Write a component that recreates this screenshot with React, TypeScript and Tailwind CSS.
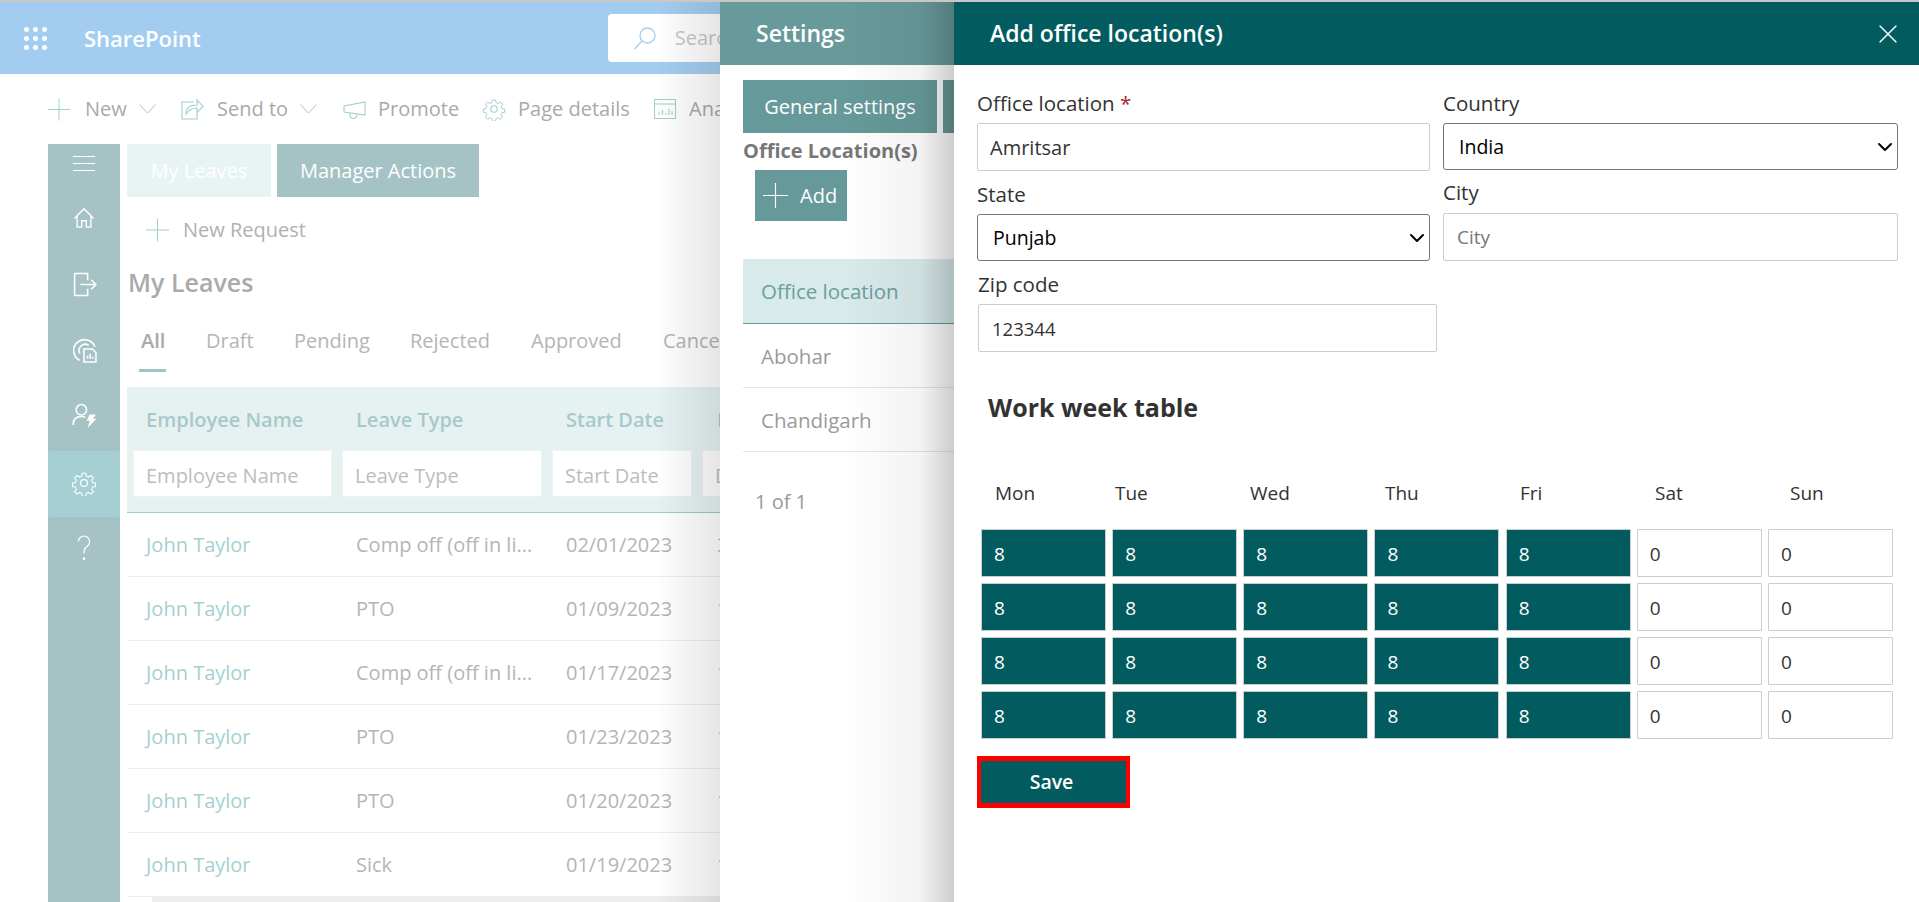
import { ChevronDown, X } from "lucide-react";
import type { ReactNode } from "react";

type IconProps = { className?: string };

const Svg = ({ className, children }: IconProps & { children: ReactNode }) => (
  <svg viewBox="0 0 24 24" fill="none" stroke="currentColor" strokeWidth="1.1" className={className}>
    {children}
  </svg>
);

const PlusIcon = ({ className }: IconProps) => (
  <svg viewBox="0 0 24 24" fill="none" stroke="currentColor" strokeWidth="1.1" className={className}>
    <path d="M12 0v24M0 12h24" />
  </svg>
);

const ThinChevron = ({ className }: IconProps) => (
  <svg viewBox="0 0 17 10" fill="none" stroke="currentColor" strokeWidth="1" className={className}>
    <path d="M.5.5l8 8.500 8-8.500" />
  </svg>
);

const GearIcon = ({ className }: IconProps) => (
  <Svg className={className}>
    <circle cx="12" cy="12" r="3.2" />
    <path d="M10.2 2h3.6l.6 3 2.1.9 2.6-1.7 2.5 2.6-1.7 2.5.9 2.1 3 .6v3.6l-3 .6-.9 2.1 1.7 2.6-2.5 2.5-2.6-1.7-2.1.9-.6 3h-3.6l-.6-3-2.1-.9-2.6 1.7-2.5-2.5 1.7-2.6-.9-2.1-3-.6v-3.6l3-.6.9-2.1-1.7-2.5 2.5-2.6 2.6 1.7 2.1-.9z" transform="translate(1.2 1.2) scale(.9)" />
  </Svg>
);

const SearchIcon = ({ className }: IconProps) => (
  <svg viewBox="0 0 24 24" fill="none" stroke="currentColor" strokeWidth="1.400" className={className}>
    <circle cx="14.5" cy="9.5" r="7.5" />
    <path d="M9 15 1.5 23" />
  </svg>
);

const SendIcon = ({ className }: IconProps) => (
  <Svg className={className}>
    <path d="M14 5H2v17h15v-6" />
    <path d="M6 17c0-6 4-9 11-9V3l6 6.5-6 6V11c-5 0-8 2-11 6z" />
  </Svg>
);

const MegaphoneIcon = ({ className }: IconProps) => (
  <Svg className={className}>
    <path d="M23 5v13L2 15V9z" />
    <path d="M8 16v2a3.5 3.5 0 0 0 7 0v-.8" />
  </Svg>
);

const AnalyticsIcon = ({ className }: IconProps) => (
  <Svg className={className}>
    <path d="M1.5 2.5h21v19h-21zM1.5 7h21" />
    <path d="M6 18v-3M9.5 18v-5M13 18v-2M16 18v-6M19 18v-4" />
  </Svg>
);

const HomeIcon = ({ className }: IconProps) => (
  <Svg className={className}>
    <path d="M1.5 12.5 12 2l10.5 10.5M4.5 10v12h5v-7h5v7h5V10" strokeWidth="1.5" />
  </Svg>
);

const ExitIcon = ({ className }: IconProps) => (
  <Svg className={className}>
    <path d="M15 8V1.5H2.500v21H15V16M8 12h15M18.500 7.500 23 12l-4.500 4.500" strokeWidth="1.5" />
  </Svg>
);

const ReportIcon = ({ className }: IconProps) => (
  <Svg className={className}>
    <path d="M7.500 21.500A10.500 10.500 0 1 1 22 8.500" strokeWidth="1.500" />
    <path d="M7.500 15A6 6 0 0 1 16 7" strokeWidth="1.500" />
    <path d="M11.500 10.500h8l3.500 3.500v9h-11.500zM15 20v-3M17.500 20v-5M20 20v-2" strokeWidth="1.500" />
  </Svg>
);

const PersonBoltIcon = ({ className }: IconProps) => (
  <Svg className={className}>
    <circle cx="9" cy="6.500" r="5" strokeWidth="1.500" />
    <path d="M1 21c0-5 3-8 8-8 1.500 0 3 .3 4 1" strokeWidth="1.500" />
    <path d="M17 11h6l-3 4h3.500L15 24l2-7h-3z" fill="currentColor" stroke="none" />
  </Svg>
);

const QuestionIcon = ({ className }: IconProps) => (
  <svg viewBox="0 0 16 28" fill="none" stroke="currentColor" strokeWidth="1.300" className={className}>
    <path d="M2 7a6 6 0 1 1 9.500 5c-2 1.500-3.500 3-3.500 6v2" />
    <circle cx="8" cy="25.500" r=".8" fill="currentColor" />
  </svg>
);

const AppDots = () => (
  <div className="grid w-[23px] grid-cols-3 gap-x-[4px] gap-y-[4px]">
    {Array.from({ length: 9 }).map((_, i) => (
      <span key={i} className="h-[5px] w-[5px] rounded-full bg-white" />
    ))}
  </div>
);

const rows = [
  { type: "Comp off (off in li...", start: "02/01/2023", days: "3" },
  { type: "PTO", start: "01/09/2023", days: "1" },
  { type: "Comp off (off in li...", start: "01/17/2023", days: "1" },
  { type: "PTO", start: "01/23/2023", days: "1" },
  { type: "PTO", start: "01/20/2023", days: "1" },
  { type: "Sick", start: "01/19/2023", days: "1" },
];

const days = ["Mon", "Tue", "Wed", "Thu", "Fri", "Sat", "Sun"];

const pivots = [
  { name: "All", width: "w-[65px] font-semibold text-[#a9a9a9]" },
  { name: "Draft", width: "w-[88px]" },
  { name: "Pending", width: "w-[116px]" },
  { name: "Rejected", width: "w-[121px]" },
  { name: "Approved", width: "w-[132px]" },
  { name: "Cancelled", width: "w-[120px]" },
];

const CommandBar = () => (
  <div className="flex h-[70px] items-center pl-[48px] text-[20px] text-[#a9a9a9]">
    <PlusIcon className="h-[23px] w-[22px] shrink-0 text-[#9fd0d0]" />
    <span className="ml-[15px] w-[54px]">New</span>
    <ThinChevron className="h-[10px] w-[17px] shrink-0 text-[#bbb]" />
    <SendIcon className="ml-[24px] h-[24px] w-[24px] shrink-0 text-[#a6cccc]" />
    <span className="ml-[13px] w-[83px]">Send to</span>
    <ThinChevron className="h-[10px] w-[17px] shrink-0 text-[#bbb]" />
    <MegaphoneIcon className="ml-[25px] h-[24px] w-[24px] shrink-0 text-[#a6cccc]" />
    <span className="ml-[12px] w-[104px]">Promote</span>
    <GearIcon className="h-[24px] w-[24px] shrink-0 text-[#a6cccc]" />
    <span className="ml-[12px] w-[135px]">Page details</span>
    <AnalyticsIcon className="h-[24px] w-[24px] shrink-0 text-[#a6cccc]" />
    <span className="ml-[12px]">Analytics</span>
  </div>
);

const Rail = () => {
  const itemClass = "flex h-[66px] items-center justify-center text-white";
  return (
    <div className="flex h-[758px] w-[72px] shrink-0 flex-col bg-[#a5c3c4]">
      <div className="flex h-[41px] flex-col items-center gap-[6px] pt-[12px]">
        <span className="h-[1px] w-[22px] bg-white" />
        <span className="h-[1px] w-[22px] bg-white" />
        <span className="h-[1px] w-[22px] bg-white" />
      </div>
      <div className={itemClass}><HomeIcon className="h-[22px] w-[22px]" /></div>
      <div className={itemClass}><ExitIcon className="h-[25px] w-[25px]" /></div>
      <div className={itemClass}><ReportIcon className="h-[25px] w-[25px]" /></div>
      <div className="flex h-[68px] items-center justify-center pb-[4px] text-white"><PersonBoltIcon className="h-[25px] w-[25px]" /></div>
      <div className={`${itemClass} rounded-[2px] bg-[#a5cfd2] pb-[3px]`}><GearIcon className="h-[26px] w-[26px]" /></div>
      <div className={`${itemClass} pb-[4px]`}><QuestionIcon className="h-[26px] w-[16px]" /></div>
    </div>
  );
};

const LeavesTable = () => {
  const filter = "h-[47px] rounded-[1px] border border-[#eef4f4] bg-white pl-[12px] pt-[3px] text-[20px] outline-none placeholder:text-[#bdbdbd]";
  return (
    <div className="mt-[15px] w-[800px] text-[20px]">
      <div className="border-b border-[#9fcaca] bg-[#e6f2f2]">
        <div className="flex h-[63px] items-center pt-[2px] font-semibold text-[#a8c9c9]">
          <span className="w-[210px] pl-[19px]">Employee Name</span>
          <span className="w-[210px] pl-[19px]">Leave Type</span>
          <span className="w-[151px] pl-[19px]">Start Date</span>
          <span className="pl-[19px]">Duration</span>
        </div>
        <div className="flex h-[62px] items-start">
          <input placeholder="Employee Name" className={`${filter} ml-[6px] mr-[10px] w-[199px]`} />
          <input placeholder="Leave Type" className={`${filter} mr-[10px] w-[200px]`} />
          <input placeholder="Start Date" className={`${filter} mr-[10px] w-[140px]`} />
          <input placeholder="Duration" className={`${filter} w-[140px]`} />
        </div>
      </div>
      {rows.map((row, index) => (
        <div key={index} className="flex h-[64px] items-center border-b border-[#eeeeee] text-[#b5b5b5]">
          <span className="w-[210px] pl-[19px] text-[#a6d0d0]">John Taylor</span>
          <span className="w-[210px] pl-[19px]">{row.type}</span>
          <span className="w-[151px] pl-[19px]">{row.start}</span>
          <span className="pl-[19px]">{row.days}</span>
        </div>
      ))}
      <div className="ml-[25px] h-[6px] bg-[#eeeeee]" />
    </div>
  );
};

const Background = () => (
  <>
    <div className="h-[2px] bg-[#c8c8c8]" />
    <header className="flex h-[72px] items-center bg-[#a3cdf0] pl-[24px]">
      <AppDots />
      <span className="ml-[37px] text-[22px] font-semibold text-white">SharePoint</span>
      <div className="ml-[407px] flex h-[48px] w-[400px] items-center rounded-[4px] bg-white pl-[25px] text-[20px] text-[#c8c8c8]">
        <SearchIcon className="h-[24px] w-[24px] text-[#a8cfee]" />
        <span className="ml-[18px]">Search</span>
      </div>
    </header>
    <CommandBar />
    <div className="flex gap-[7px] pl-[48px]">
      <Rail />
      <div>
        <div className="flex gap-[6px] text-[20px] text-white">
          <div className="flex h-[53px] w-[144px] items-center justify-center bg-[#e8f3f3] pt-[1px]">My Leaves</div>
          <div className="flex h-[53px] w-[202px] items-center justify-center bg-[#a5c3c4] pt-[1px]">Manager Actions</div>
        </div>
        <div className="mt-[21px] flex h-[24px] items-center pl-[19px] text-[20px] text-[#b0b0b0]">
          <PlusIcon className="h-[24px] w-[23px] shrink-0 text-[#9fd0d0]" />
          <span className="ml-[14px]">New Request</span>
        </div>
        <h1 className="mt-[22px] h-[36px] pl-[1px] text-[25px] font-semibold leading-[36px] text-[#aaaaaa]">My Leaves</h1>
        <div className="mt-[28px] flex h-[26px] items-center pl-[14px] text-[20px] text-[#b5b5b5]">
          {pivots.map((p) => (
            <span key={p.name} className={`${p.width} shrink-0`}>{p.name}</span>
          ))}
        </div>
        <div className="ml-[12px] mt-[15px] h-[3px] w-[27px] bg-[#a5c3c4]" />
        <LeavesTable />
      </div>
    </div>
  </>
);

const SettingsPanel = () => (
  <aside className="absolute bottom-0 left-[720px] top-[2px] w-[234px] bg-white">
    <div className="flex h-[63px] items-center bg-[#689a9b] pl-[36px] text-[23px] font-semibold text-white">Settings</div>
    <div className="pl-[23px]">
      <div className="mt-[15px] flex gap-[6px] text-[20px] text-white">
        <div className="flex h-[53px] w-[194px] shrink-0 items-center justify-center bg-[#669999]">General settings</div>
        <div className="h-[53px] w-[11px] shrink-0 bg-[#669999]" />
      </div>
      <div className="mt-[5px] whitespace-nowrap text-[20px] font-bold leading-[26px] text-[#777777]">Office Location(s)</div>
      <div className="ml-[12px] mt-[6px] flex h-[51px] w-[92px] items-center bg-[#669999] pl-[8px] text-[20px] text-white">
        <PlusIcon className="h-[25px] w-[25px] shrink-0" />
        <span className="ml-[12px]">Add</span>
      </div>
      <div className="mt-[38px] flex h-[65px] items-center border-b border-[#669999] bg-[#d8eaea] pl-[18px] text-[20.500px] text-[#6b9e9e]">Office location</div>
      <div className="flex h-[64px] items-center border-b border-[#e5e5e5] pl-[18px] pt-[2px] text-[20.500px] text-[#9a9a9a]">Abohar</div>
      <div className="flex h-[64px] items-center border-b border-[#e5e5e5] pl-[18px] pt-[2px] text-[20.500px] text-[#9a9a9a]">Chandigarh</div>
      <div className="mt-[35px] pl-[12px] text-[20px] text-[#9a9a9a]">1 of 1</div>
    </div>
    <div className="pointer-events-none absolute bottom-0 right-0 top-0 w-[110px] bg-gradient-to-r from-transparent via-black/[0.05] via-70% to-black/20" />
  </aside>
);

const fieldClass = "rounded-[2px] border border-[#cccccc] bg-white text-[#333333] outline-none placeholder:text-[#777777]";
const selectClass = "w-full appearance-none rounded-[3px] border border-[#767676] bg-white pl-[15px] text-[19.500px] text-black";
const labelClass = "block h-[24px] text-[20.500px] leading-[22px] text-[#323232]";

const SelectBox = ({ value }: { value: string }) => (
  <div className="relative mt-[7px]">
    <select defaultValue={value} className={`${selectClass} h-[47px]`}>
      <option>{value}</option>
    </select>
    <ChevronDown className="absolute right-[1px] top-[12px] h-[24px] w-[24px] text-black" strokeWidth={2} />
  </div>
);

const AddPanel = () => (
  <aside className="absolute bottom-0 left-[954px] top-[2px] w-[965px] bg-white">
    <div className="flex h-[63px] items-center justify-between bg-[#025c5f] pl-[36px] pr-[21px] text-[23px] font-semibold text-white">
      <span>Add office location(s)</span>
      <X className="h-[32px] w-[32px] -mr-[6px]" strokeWidth={1} />
    </div>
    <div className="flex gap-[13px] pl-[23px] pt-[27px]">
      <div className="w-[453px]">
        <label className={labelClass}>Office location <span className="text-[#a4262c]">*</span></label>
        <input defaultValue="Amritsar" className={`${fieldClass} mt-[7px] h-[48px] w-full pl-[12px] text-[20px]`} />
        <label className={`${labelClass} mt-[12px]`}>State</label>
        <SelectBox value="Punjab" />
      </div>
      <div className="w-[455px]">
        <label className={labelClass}>Country</label>
        <SelectBox value="India" />
        <label className={`${labelClass} mt-[11px]`}>City</label>
        <input placeholder="City" className={`${fieldClass} mt-[8px] h-[48px] w-full pl-[13px] text-[19px]`} />
      </div>
    </div>
    <div className="pl-[24px] pt-[12px]">
      <label className={labelClass}>Zip code</label>
      <input defaultValue="123344" className={`${fieldClass} mt-[7px] h-[48px] w-[459px] pl-[13px] text-[18.500px]`} />
    </div>
    <h2 className="mt-[40px] h-[30px] pl-[34px] text-[25px] font-bold leading-[30px] text-[#323232]">Work week table</h2>
    <div className="mt-[59px] flex h-[24px] items-center pl-[41px] text-[19px] text-[#323232]">
      {days.map((day, i) => (
        <span key={day} className={`shrink-0 ${i === 0 ? "w-[120px]" : "w-[135px]"}`}>{day}</span>
      ))}
    </div>
    <div className="ml-[27px] mt-[24px] grid w-[912px] grid-cols-7 gap-x-[6.170px] gap-y-[6px]">
      {Array.from({ length: 28 }).map((_, i) => {
        const weekend = i % 7 > 4;
        return (
          <input
            key={i}
            defaultValue={weekend ? "0" : "8"}
            className={`h-[48px] w-[125px] rounded-[1px] border border-[#cccccc] pl-[12px] pt-[1px] text-[19px] outline-none ${weekend ? "bg-white text-[#333333]" : "bg-[#025c5f] text-white"}`}
          />
        );
      })}
    </div>
    <button className="ml-[23px] mt-[17px] h-[52px] w-[153px] border-x-4 border-y-[5px] border-[#ff0000] bg-[#025c5f] pr-[4px] text-[19.500px] font-semibold text-white">
      Save
    </button>
  </aside>
);

export default function App() {
  return (
    <div className="relative h-[902px] w-[1919px] overflow-hidden bg-white font-['Open_Sans',sans-serif]">
      <Background />
      <div className="pointer-events-none absolute bottom-0 left-[655px] top-[2px] w-[65px] bg-gradient-to-r from-transparent to-black/10" />
      <SettingsPanel />
      <AddPanel />
    </div>
  );
}
